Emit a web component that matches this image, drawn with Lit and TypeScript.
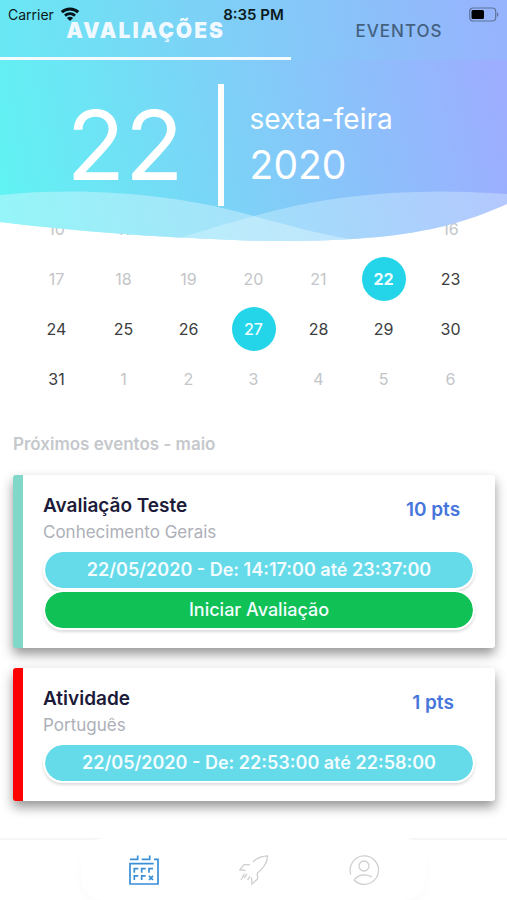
import { LitElement, html, css, svg } from "lit";
import { customElement, property, state } from "lit/decorators.js";
import { classMap } from "lit/directives/class-map.js";

type Day = { n: number; tone: "muted" | "normal" | "today" | "marked" };

const muted = (n: number): Day => ({ n, tone: "muted" });
const normal = (n: number): Day => ({ n, tone: "normal" });

const WEEKS: Day[][] = [
  [10, 11, 12, 13, 14, 15, 16].map(muted),
  [...[17, 18, 19, 20, 21].map(muted), { n: 22, tone: "today" }, normal(23)],
  [...[24, 25, 26].map(normal), { n: 27, tone: "marked" }, ...[28, 29, 30].map(normal)],
  [normal(31), ...[1, 2, 3, 4, 5, 6].map(muted)],
];

@customElement("status-bar")
class StatusBar extends LitElement {
  static styles = css`
    :host {
      display: grid;
      grid-template-columns: 1fr auto 1fr;
      align-items: center;
      height: 28px;
      padding: 0 8px;
      font-size: 14px;
      color: #0b1a20;
    }
    .carrier {
      display: flex;
      align-items: center;
      gap: 6px;
    }
    .time {
      font-size: 15px;
      font-weight: 600;
    }
    .battery {
      justify-self: end;
      display: block;
    }
  `;
  render() {
    return html`
      <span class="carrier">
        Carrier
        <svg width="20" height="14" viewBox="0 0 20 14" fill="none" stroke="#06141a" stroke-width="3" aria-hidden="true">
          <path d="M1.8 5.2C6.4.8 13.6.8 18.2 5.2" />
          <path d="M5 8.6C7.8 6 12.2 6 15 8.6" stroke-width="2.8" />
          <path d="M10 14 6.9 10.9C8.6 9.300 11.400 9.300 13.100 10.900Z" fill="#06141a" stroke="none" />
        </svg>
      </span>
      <span class="time">8:35 PM</span>
      <svg class="battery" width="30" height="15" viewBox="1 0 30 15" aria-hidden="true">
        <rect x="1.700" y="1" width="26" height="13" rx="3.500" fill="none" stroke="#5f7497" stroke-width="1.200" />
        <rect x="3.500" y="3" width="12.500" height="9" rx="1.500" fill="#000" />
        <path d="M29 5.200c1.700.6 1.700 4 0 4.600z" fill="#5f7497" />
      </svg>
    `;
  }
}

@customElement("date-header")
class DateHeader extends LitElement {
  @state() tab = 0;
  static styles = css`
    :host {
      display: block;
      position: relative;
      z-index: 1;
      height: 241px;
      pointer-events: none;
    }
    .backdrop {
      position: absolute;
      inset: 0;
      width: 100%;
      height: 100%;
      z-index: -1;
    }
    status-bar {
      position: absolute;
      top: 0;
      left: 0;
      right: 0;
    }
    .tabs {
      display: grid;
      grid-template-columns: 58fr 43fr;
      height: 60px;
      background: rgba(127, 208, 247, 0.2);
    }
    .tab {
      pointer-events: auto;
      margin: 0;
      padding: 4px 0 0;
      border: 0;
      border-bottom: 3px solid transparent;
      background: none;
      font: 500 17px/20px Inter, sans-serif;
      letter-spacing: 1px;
      color: #43617f;
    }
    .tab.active {
      border-color: #f4fbff;
      font-size: 21px;
      font-weight: 900;
      letter-spacing: 2px;
      color: #f0f9ff;
    }
    .date {
      display: grid;
      grid-template-columns: 43fr auto 56fr;
      height: 122px;
      margin-top: 24px;
      color: #fff;
    }
    .day {
      padding-right: 34px;
      text-align: right;
      font-size: 96px;
      font-weight: 400;
      line-height: 122px;
    }
    .rule {
      width: 6px;
      background: #fff;
    }
    .detail {
      padding: 12px 0 0 26px;
      font-size: 28px;
      line-height: 46px;
    }
    .year {
      font-size: 39px;
    }
  `;
  render() {
    const labels = ["AVALIAÇÕES", "EVENTOS"];
    return html`
      <svg class="backdrop" viewBox="0 0 507 241" preserveAspectRatio="none" aria-hidden="true">
        <defs>
          <linearGradient id="sky" gradientUnits="userSpaceOnUse" x1="0" y1="170" x2="500" y2="70">
            <stop offset="0" stop-color="#61f2f3" />
            <stop offset=".5" stop-color="#80cef8" />
            <stop offset="1" stop-color="#9dadff" />
          </linearGradient>
          <clipPath id="edge">
            <path d="M0 0H507V204C440 234 380 241 270 241C180 239 80 232 0 222Z" />
          </clipPath>
        </defs>
        <g clip-path="url(#edge)">
          <rect width="507" height="241" fill="url(#sky)" />
          <path d="M0 195C90 186 180 195 254 216C290 226 320 234 350 239V241H0Z" fill="#e6fbff" fill-opacity=".4" />
          <path d="M507 194C415 187 330 194 254 216C225 224 205 230 180 238V241H507Z" fill="#e6fbff" fill-opacity=".33" />
        </g>
      </svg>
      <div class="tabs" role="tablist">
        ${labels.map(
          (label, i) => html`<button
            class=${classMap({ tab: true, active: this.tab === i })}
            role="tab"
            aria-selected=${this.tab === i}
            @click=${() => (this.tab = i)}
          >${label}</button>`
        )}
      </div>
      <status-bar></status-bar>
      <div class="date">
        <div class="day">22</div>
        <div class="rule"></div>
        <div class="detail">
          <div>sexta-feira</div>
          <div class="year">2020</div>
        </div>
      </div>
    `;
  }
}

@customElement("month-grid")
class MonthGrid extends LitElement {
  static styles = css`
    :host {
      display: block;
      padding: 0 22px;
    }
    .week {
      display: grid;
      grid-template-columns: 69fr repeat(5, 65fr) 69fr;
      place-items: center;
      height: 50px;
    }
    .day {
      width: 44px;
      height: 44px;
      padding: 0;
      border: 0;
      border-radius: 50%;
      background: none;
      font: 400 16px/44px Inter, sans-serif;
      color: #3b3d40;
    }
    .muted {
      color: #c3c5c8;
    }
    .today,
    .marked {
      background: #24d5e9;
      color: #effdff;
    }
    .marked {
      font-weight: 500;
    }
    .today {
      font-weight: 700;
    }
  `;
  render() {
    return WEEKS.map(
      (week) => html`<div class="week">
        ${week.map((d) => html`<button class="day ${d.tone}">${d.n}</button>`)}
      </div>`
    );
  }
}

@customElement("event-card")
class EventCard extends LitElement {
  @property() name = "";
  @property() subject = "";
  @property() points = "";
  @property() period = "";
  @property() tone = "open";
  @property() action = "";
  static styles = css`
    .card {
      padding: 18px 20px;
      border-left: 10px solid #82d8c8;
      border-radius: 3px;
      background: #fff;
      box-shadow: 0 6px 12px rgba(0, 0, 0, 0.42);
    }
    .card.late {
      border-left-color: #f00;
    }
    .head {
      display: grid;
      grid-template-columns: 1fr 84px;
      margin-bottom: 5px;
    }
    .name,
    .subject {
      margin: 0;
      font-size: 19px;
      font-weight: 600;
      line-height: 26px;
      color: #1d1b3a;
    }
    .subject {
      font-size: 17px;
      font-weight: 400;
      color: #adb0b8;
    }
    .points {
      text-align: center;
      font-size: 19px;
      font-weight: 600;
      line-height: 34px;
      color: #4676dc;
    }
    .pill {
      box-sizing: border-box;
      display: block;
      width: 100%;
      height: 40px;
      margin: 0;
      padding: 0;
      border: 2px solid #fff;
      border-radius: 20px;
      background: #65dae9;
      background-clip: padding-box;
      box-shadow: 0 2px 3px rgba(0, 0, 0, 0.14);
      text-align: center;
      font: 600 18px/36px Inter, sans-serif;
      color: #f3fdff;
    }
    .start {
      position: relative;
      background-color: #10c156;
      font-weight: 500;
    }
  `;
  render() {
    return html`<article class=${classMap({ card: true, late: this.tone === "late" })}>
      <div class="head">
        <div>
          <h3 class="name">${this.name}</h3>
          <p class="subject">${this.subject}</p>
        </div>
        <div class="points">${this.points}</div>
      </div>
      <div class="pill">${this.period}</div>
      ${this.action ? html`<button class="pill start">${this.action}</button>` : ""}
    </article>`;
  }
}

const calendarIcon = svg`
  <path d="M1 4.300H8.700V.5M12.700 4.300H20.700V.5M25 4.300H29V29H1V8.700H24.700" />
  <path d="M5.300 17.700V13.700H9.300M12.700 17.700V13.700H16.700M20 17.700V13.700H24M5.300 25V20.800H9.300M12.700 25V20.800H16.700M20 20.800L24 25M24 20.800L20 25" />`;

const rocketIcon = svg`
  <path d="M14 6.700C18 3 23 1 28.500.8C28.700 8 24 13.500 18.300 18.300L18.600 24L13 29L12.500 22.500" />
  <path d="M11 9.700H5L.8 15L6.500 15.500M8 19L5 23M11 21.500L8.500 25M5.500 18.500L2 25" />`;

const profileIcon = svg`
  <path d="M1.800 19.500A14.200 14.200 0 1 1 10 28.300C8 27.600 6.500 26.500 5.200 25C9 19.200 17 18.500 23 22" />
  <circle cx="15" cy="11" r="5" />`;

@customElement("tab-bar")
class TabBar extends LitElement {
  static styles = css`
    :host {
      display: block;
      border-top: 2px solid #f6f6f7;
    }
    .dock {
      display: flex;
      justify-content: center;
      gap: 80px;
      width: 68%;
      margin: -2px auto 0;
      padding: 17px 0 15px;
      border-radius: 24px;
      background: #fff;
      box-shadow: 0 6px 14px rgba(0, 0, 0, 0.02);
    }
    .item {
      padding: 0;
      border: 0;
      background: none;
      color: #cfcfd2;
    }
    .item.active {
      color: #3b8fd6;
    }
    .icon {
      display: block;
      width: 30px;
      height: 30px;
      fill: none;
      stroke: currentColor;
      stroke-width: 1.3;
    }
    .active .icon {
      stroke-width: 1.7;
    }
  `;
  render() {
    const items = [
      { label: "Calendário", icon: calendarIcon },
      { label: "Atividades", icon: rocketIcon },
      { label: "Perfil", icon: profileIcon },
    ];
    return html`<nav class="dock">
      ${items.map(
        (it, i) => html`<button class=${classMap({ item: true, active: i === 0 })} aria-label=${it.label}>
          <svg class="icon" viewBox="0 0 30 30" aria-hidden="true">${it.icon}</svg>
        </button>`
      )}
    </nav>`;
  }
}

@customElement("app-root")
class AppRoot extends LitElement {
  static styles = css`
    :host {
      display: flex;
      flex-direction: column;
      min-height: 100vh;
      background: #fff;
      font-family: Inter, sans-serif;
    }
    .calendar {
      margin-top: -37px;
    }
    .events {
      display: flex;
      flex-direction: column;
      gap: 20px;
      padding: 29px 12px 24px 13px;
    }
    .heading {
      margin: 0;
      font-size: 17px;
      font-weight: 600;
      line-height: 22px;
      color: #c5c8cc;
    }
    .bottom {
      margin-top: auto;
    }
  `;
  render() {
    return html`
      <date-header></date-header>
      <month-grid class="calendar"></month-grid>
      <section class="events">
        <h2 class="heading">Próximos eventos - maio</h2>
        <event-card
          name="Avaliação Teste"
          subject="Conhecimento Gerais"
          points="10 pts"
          period="22/05/2020 - De: 14:17:00 até 23:37:00"
          action="Iniciar Avaliação"
        ></event-card>
        <event-card
          name="Atividade"
          subject="Português"
          points="1 pts"
          period="22/05/2020 - De: 22:53:00 até 22:58:00"
          tone="late"
        ></event-card>
      </section>
      <tab-bar class="bottom"></tab-bar>
    `;
  }
}
